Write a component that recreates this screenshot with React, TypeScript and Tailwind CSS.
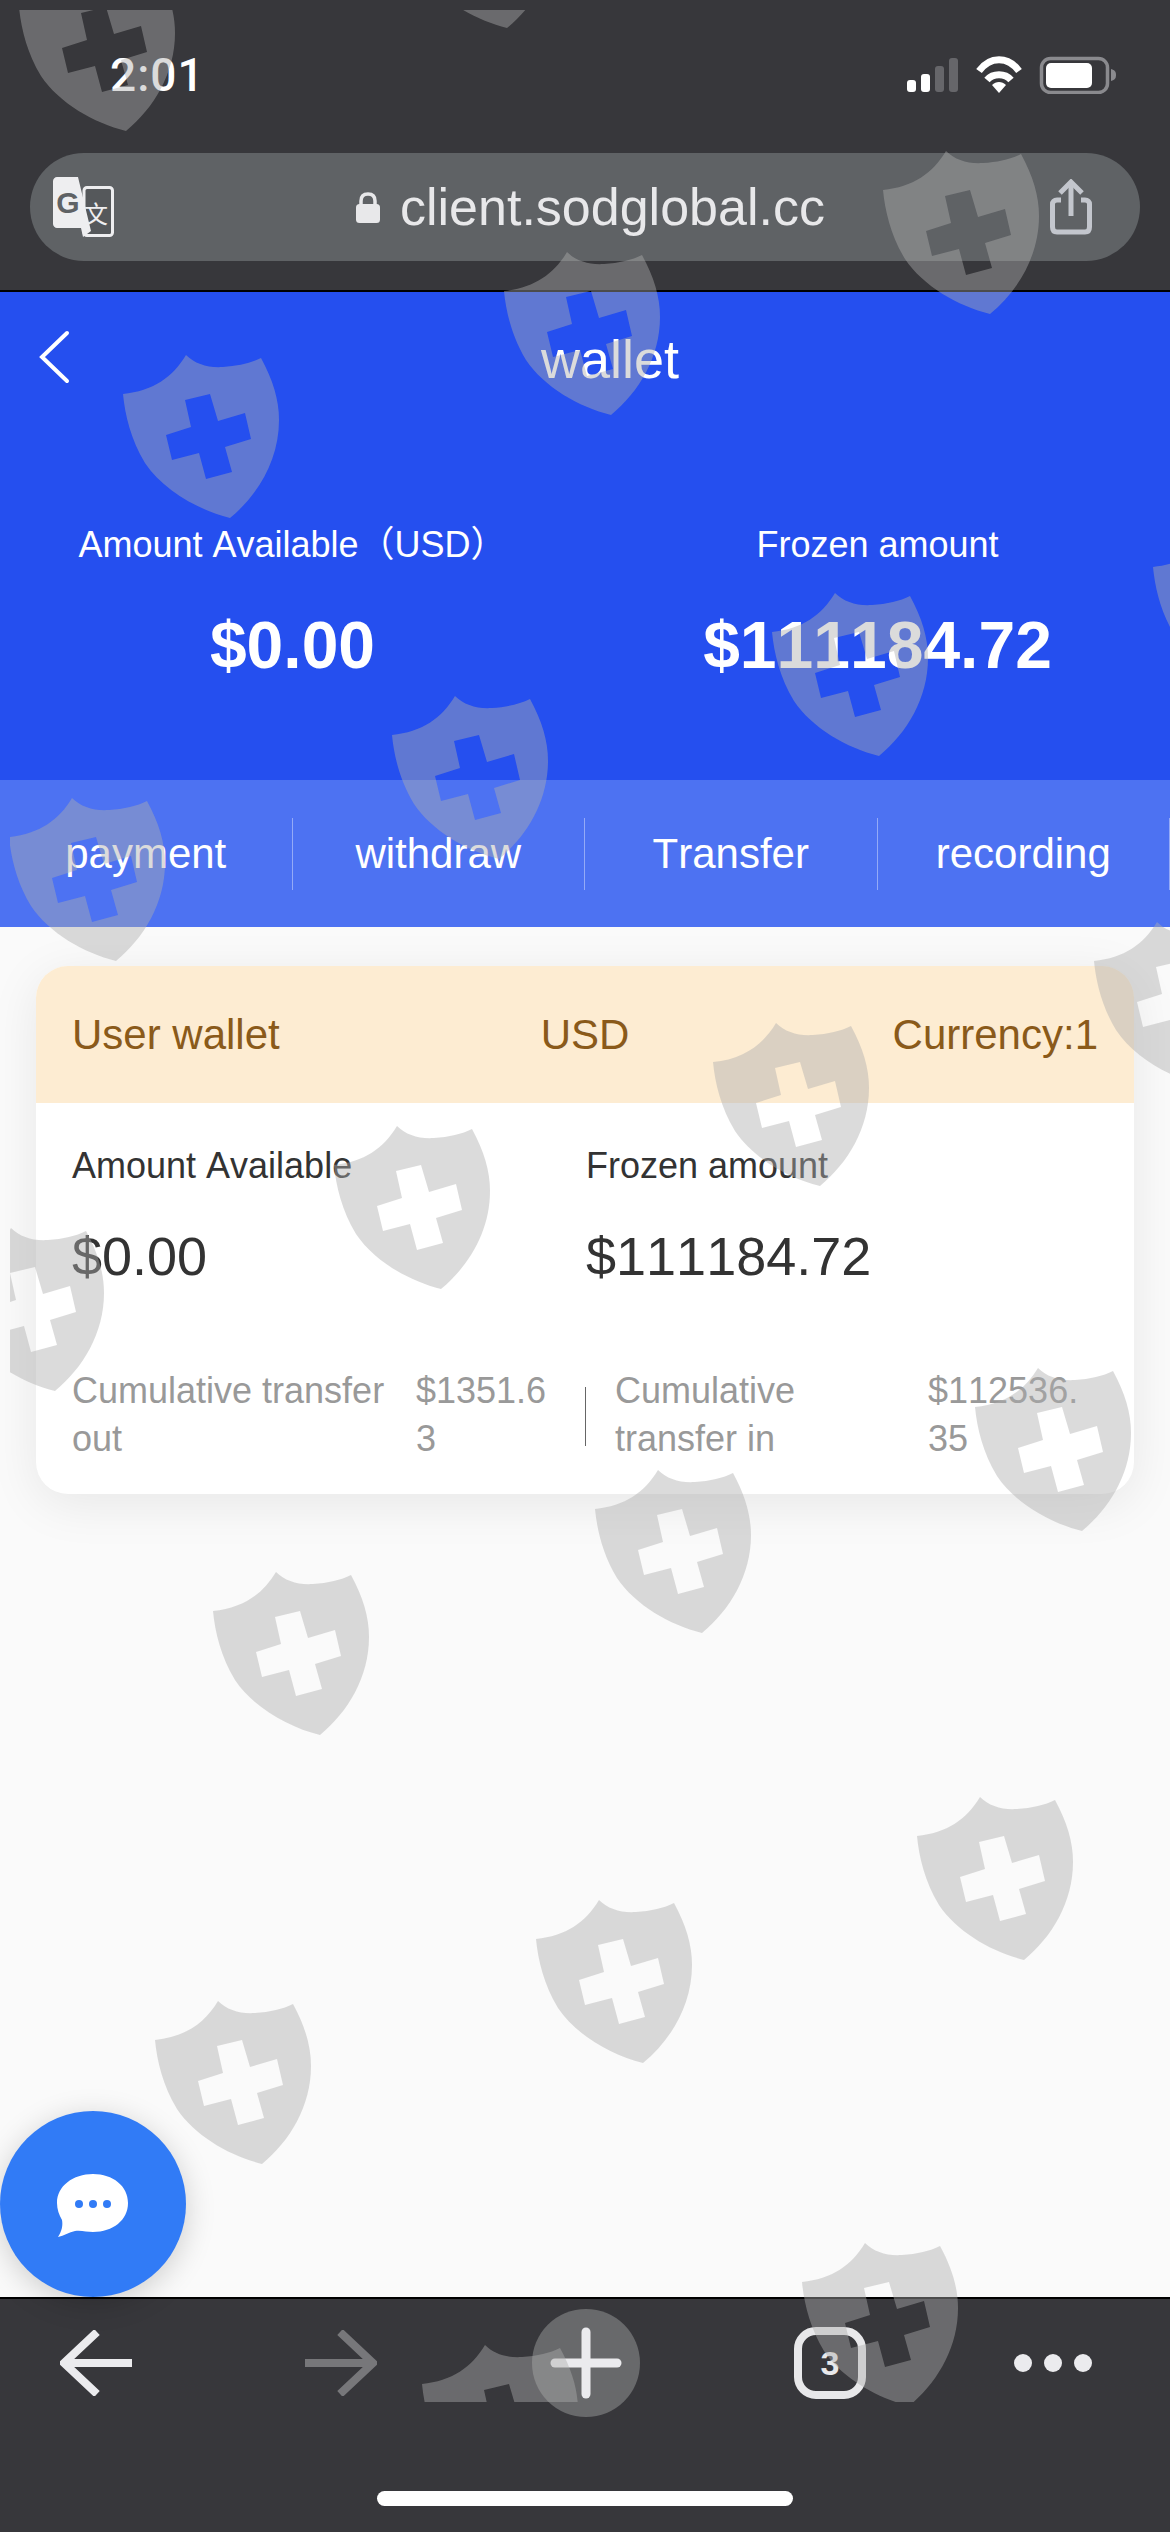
import React from 'react';

// watermark shields, x/y are page coordinates of the shield's top-left
const shields = [
  [19, -32], [400, -135], [883, 151], [504, 252], [123, 355], [1153, 528], [772, 593], [392, 696],
  [9, 798], [1094, 922], [713, 1023], [334, 1126], [-52, 1228], [975, 1368], [595, 1470], [213, 1572],
  [917, 1797], [536, 1900], [155, 2001], [802, 2243], [422, 2345],
];

const SHIELD =
  'M0 39C30 36 50 22 63 0C72 9 85 13 100 12C115 11 128 8 138 3C150 25 156 45 156 65C156 105 135 140 107 163C75 155 40 135 22 108C8 85 2 60 0 39Z' +
  'M62 45L87 39L95 66L122 58L128 84L102 92L109 117L83 124L76 98L49 105L43 80L68 72Z';

function Watermark() {
  return (
    <svg className="absolute left-[10px] top-[10px] w-[1160px] h-[2392px] pointer-events-none z-50" viewBox="10 10 1160 2392">
      {shields.map(([x, y]) => (
        <path key={`${x}-${y}`} d={SHIELD} transform={`translate(${x} ${y})`} fill="#acacac" fillOpacity="0.44" fillRule="evenodd" />
      ))}
    </svg>
  );
}

function StatusIcons() {
  return (
    <svg className="w-[210px] h-[38px]" viewBox="907 55 210 38">
      <rect x="907" y="79" width="9" height="12" rx="3" fill="#fff" />
      <rect x="921" y="73" width="9" height="18" rx="3" fill="#fff" />
      <rect x="935" y="65" width="9" height="26" rx="3" fill="#66666a" />
      <rect x="949" y="57" width="9" height="34" rx="3" fill="#66666a" />
      <path d="M979 70C990 55 1008 55 1019 70" fill="none" stroke="#fff" strokeWidth="7" />
      <path d="M987 79C993 72 1005 72 1011 79" fill="none" stroke="#fff" strokeWidth="7" />
      <path d="M992 84C996 80 1002 80 1006 84L999 92Z" fill="#fff" />
      <rect x="1041.5" y="57.5" width="66" height="34" rx="9" fill="none" stroke="#8a8a8e" strokeWidth="3.5" />
      <rect x="1046" y="62" width="46" height="25" rx="5" fill="#fff" />
      <path d="M1111 68C1115 69 1116 71 1116 74C1116 77 1115 79 1111 80Z" fill="#8a8a8e" />
    </svg>
  );
}

function TranslateIcon() {
  return (
    <svg className="w-[61px] h-[60px] shrink-0" viewBox="0 0 61 60">
      <rect x="31" y="10.5" width="28.5" height="48" rx="3" fill="#55585b" stroke="#eeeef0" strokeWidth="3" />
      <path d="M4 0H25L38 54L30 60L28 51H4C2 51 0 49 0 47V4C0 2 2 0 4 0Z" fill="#eeeef0" />
      <text x="15" y="36" textAnchor="middle" fontSize="30" fontWeight="700" fill="#5f6265" fontFamily="Liberation Sans, sans-serif">G</text>
      <text x="43" y="46" textAnchor="middle" fontSize="24" fill="#eeeef0" fontFamily="Noto Sans CJK SC, sans-serif">文</text>
    </svg>
  );
}

function LockIcon() {
  return (
    <svg className="w-[24px] h-[31px] shrink-0" viewBox="0 0 24 31">
      <path d="M5 13V9C5 4 8 2 12 2C16 2 19 4 19 9V13" fill="none" stroke="#e8e8ea" strokeWidth="3.5" />
      <rect x="0" y="12" width="24" height="19" rx="3.5" fill="#e8e8ea" />
    </svg>
  );
}

function ShareIcon() {
  return (
    <svg className="w-[42px] h-[56px] shrink-0" viewBox="0 0 42 56" fill="none" stroke="#c3c6cd" strokeWidth="5">
      <path d="M11 21H7C4 21 2.500 23 2.500 25V48C2.500 51 4 53 7 53H35C38 53 39.500 51 39.500 48V25C39.500 23 38 21 35 21H31" />
      <path d="M21 37V3" />
      <path d="M10 14L21 3L32 14" />
    </svg>
  );
}

function ChatButton() {
  return (
    <div className="absolute left-0 bottom-0 w-[186px] h-[186px] rounded-full bg-[#317bf6] shadow-[0_6px_30px_rgba(0,0,0,0.18)] flex items-center justify-center">
      <svg className="w-[72px] h-[64px] mt-[4px]" viewBox="0 0 72 64">
        <path d="M36 0C56 0 71 12 71 29C71 46 56 58 36 58C30 58 24 56 18 57C12 58 7 62 1 63C5 57 6 51 5 46C2 41 0 35 0 29C0 12 16 0 36 0Z" fill="#fff" />
        <circle cx="22" cy="30" r="4" fill="#317bf6" />
        <circle cx="36" cy="30" r="4" fill="#317bf6" />
        <circle cx="50" cy="30" r="4" fill="#317bf6" />
      </svg>
    </div>
  );
}

function StatCell({ label, value, labelW, valueW, gap }: { label: string; value: string; labelW: string; valueW: string; gap: string }) {
  return (
    <div className={`flex ${gap} text-[36px] leading-[48px] text-[#999]`}>
      <div className={labelW}>{label}</div>
      <div className={`${valueW} break-all`}>{value}</div>
    </div>
  );
}

export default function App() {
  const tabs = ['payment', 'withdraw', 'Transfer', 'recording'];

  return (
    <div className="relative w-[1170px] h-[2532px] overflow-hidden flex flex-col bg-[#fafafa] [font-kerning:none] font-['Liberation_Sans','Noto_Sans_CJK_SC',sans-serif]">
      {/* browser chrome */}
      <div className="h-[292px] shrink-0 bg-[#37373b] border-b-2 border-black">
        <div className="flex items-center justify-between pt-[52px] pl-[110px] pr-[53px]">
          <span className="font-['Roboto',sans-serif] font-medium text-[46px] leading-none tracking-[1px] text-white">2:01</span>
          <StatusIcons />
        </div>
        <div className="mt-[55px] mx-[30px] h-[108px] rounded-[54px] bg-[#5f6265] flex items-center pl-[23px] pr-[48px]">
          <TranslateIcon />
          <div className="ml-[242px] flex items-center gap-[20px]">
            <LockIcon />
            <span className="text-[52px] leading-none text-[#e8e8ea]">client.sodglobal.cc</span>
          </div>
          <div className="ml-auto">
            <ShareIcon />
          </div>
        </div>
      </div>

      {/* blue wallet header */}
      <div className="h-[488px] shrink-0 bg-[#254fef] text-white">
        <div className="relative pt-[40px] text-center text-[54px] leading-none pl-[50px]">
          wallet
          <svg className="absolute left-[38px] top-[38px] w-[32px] h-[54px]" viewBox="0 0 32 54" fill="none" stroke="#fff" strokeWidth="4" strokeLinecap="round">
            <path d="M29 3L4 27L29 51" />
          </svg>
        </div>
        <div className="mt-[141px] grid grid-cols-2 text-center">
          <div>
            <div className="text-[36px] leading-none">Amount Available（USD）</div>
            <div className="mt-[49px] text-[66px] leading-none font-bold">$0.00</div>
          </div>
          <div>
            <div className="text-[36px] leading-none">Frozen amount</div>
            <div className="mt-[49px] text-[66px] leading-none font-bold">$111184.72</div>
          </div>
        </div>
      </div>

      {/* action tabs */}
      <div className="h-[147px] shrink-0 bg-[#4d72f2] grid grid-cols-4 items-center">
        {tabs.map((tab) => (
          <div key={tab} className="h-[72px] flex items-center justify-center border-r border-white/40 text-[42px] leading-none text-white">
            {tab}
          </div>
        ))}
      </div>

      {/* content */}
      <div className="relative flex-1 pt-[39px] px-[36px]">
        <div className="rounded-[32px] bg-white overflow-hidden shadow-[0_10px_50px_rgba(0,0,0,0.08)]">
          <div className="h-[137px] bg-[#fdecd2] grid grid-cols-[1fr_auto_1fr] px-[36px] pt-[48px] text-[42px] leading-none text-[#8a5a1a]">
            <span>User wallet</span>
            <span>USD</span>
            <span className="text-right">Currency:1</span>
          </div>
          <div className="px-[36px] pt-[45px] pb-[31px]">
            <div className="grid grid-cols-2 text-[#333]">
              <div>
                <div className="text-[36px] leading-none">Amount Available</div>
                <div className="mt-[45px] text-[54px] leading-none">$0.00</div>
              </div>
              <div className="pl-[1px]">
                <div className="text-[36px] leading-none">Frozen amount</div>
                <div className="mt-[45px] text-[54px] leading-none">$111184.72</div>
              </div>
            </div>
            <div className="mt-[84px] flex items-center">
              <div className="w-[513px] shrink-0">
                <StatCell label="Cumulative transfer out" value="$1351.63" labelW="w-[325px]" valueW="w-[140px]" gap="gap-[19px]" />
              </div>
              <div className="w-px h-[59px] bg-[#666] shrink-0 mt-[2px]" />
              <div className="ml-[29px]">
                <StatCell label="Cumulative transfer in" value="$112536.35" labelW="w-[295px]" valueW="w-[160px]" gap="gap-[18px]" />
              </div>
            </div>
          </div>
        </div>
        <ChatButton />
      </div>

      {/* browser toolbar */}
      <div className="h-[235px] shrink-0 bg-[#37373b] border-t-2 border-black flex flex-col items-start">
        <div className="flex items-center pl-[60px] pt-[10px]">
          <svg className="w-[72px] h-[66px] shrink-0" viewBox="0 0 72 66" fill="none" stroke="#ebebee" strokeWidth="8">
            <path d="M37 2L4 33L37 64" />
            <path d="M4 33H72" />
          </svg>
          <svg className="ml-[173px] w-[72px] h-[66px] shrink-0" viewBox="0 0 72 66" fill="none" stroke="#77777a" strokeWidth="8">
            <path d="M35 2L68 33L35 64" />
            <path d="M68 33H0" />
          </svg>
          <div className="ml-[155px] w-[108px] h-[108px] rounded-full bg-[#68696b] flex items-center justify-center shrink-0">
            <svg className="w-[72px] h-[72px]" viewBox="0 0 72 72" fill="none" stroke="#ebebee" strokeWidth="9" strokeLinecap="round">
              <path d="M36 5V67" />
              <path d="M5 36H67" />
            </svg>
          </div>
          <div className="ml-[154px] w-[72px] h-[72px] rounded-[22px] border-[8px] border-[#e8e8ea] flex items-center justify-center text-[34px] leading-none font-bold text-[#e8e8ea] shrink-0">
            3
          </div>
          <div className="ml-[148px] flex gap-[12px] shrink-0">
            <div className="w-[18px] h-[18px] rounded-full bg-[#ebebee]" />
            <div className="w-[18px] h-[18px] rounded-full bg-[#ebebee]" />
            <div className="w-[18px] h-[18px] rounded-full bg-[#ebebee]" />
          </div>
        </div>
        <div className="mt-[74px] ml-[377px] w-[416px] h-[15px] rounded-full bg-white" />
      </div>

      <Watermark />
    </div>
  );
}
